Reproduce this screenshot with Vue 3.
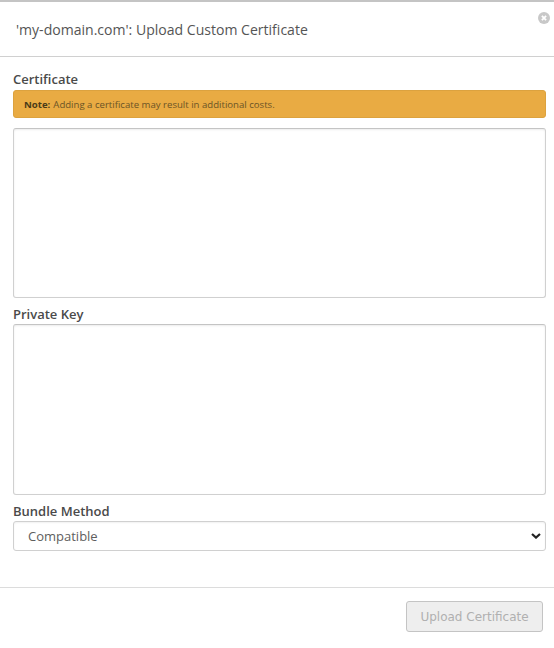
<template>
    <div class="modal">
        <div class="modal-header">
            <h2 class="modal-title">'my-domain.com': Upload Custom Certificate</h2>
            <span class="modal-close">
                <svg width="12" height="12" viewBox="0 0 12 12">
                    <circle cx="6" cy="6" r="6" fill="#c8c8c8" />
                    <path d="M3.9 3.9l4.2 4.2M8.1 3.9l-4.2 4.2" stroke="#fff" stroke-width="1.8" />
                </svg>
            </span>
        </div>
        <div class="modal-body">
            <label class="field-label first">Certificate</label>
            <div class="note"><strong>Note:</strong> Adding a certificate may result in additional costs.</div>
            <textarea class="field-area cert" v-model="certificate"></textarea>
            <label class="field-label">Private Key</label>
            <textarea class="field-area" v-model="privateKey"></textarea>
            <label class="field-label">Bundle Method</label>
            <div class="select-wrap">
                <select class="field-select" v-model="bundle">
                    <option v-for="opt in bundleOptions" :key="opt">{{ opt }}</option>
                </select>
                <svg class="select-arrow" width="10" height="6" viewBox="0 0 10 6">
                    <path d="M1 1l4 3.6L9 1" fill="none" stroke="#222" stroke-width="2.2" />
                </svg>
            </div>
        </div>
        <div class="modal-footer">
            <button class="btn-upload" disabled>Upload Certificate</button>
        </div>
    </div>
</template>

<script setup>
import { ref } from 'vue'

const certificate = ref("")
const privateKey = ref("")
const bundle = ref("Compatible")
const bundleOptions = ['Compatible', 'Modern', 'User-defined']
</script>

<style>
html,
body {
    margin: 0;
    background: #fff;
}
</style>

<style scoped>
.modal {
    width: 554px;
    height: 648px;
    box-sizing: border-box;
    display: flex;
    flex-direction: column;
    position: relative;
    border-top: 2px solid #c4c4c4;
    font-family: "Open Sans", "Liberation Sans", sans-serif;
    color: #444;
}

.modal-header {
    height: 55px;
    box-sizing: border-box;
    padding: 0 16px;
    display: flex;
    align-items: center;
    border-bottom: 1px solid #d0d0d0;
}

.modal-title {
    margin: 0;
    font-size: 14.05px;
    font-weight: 400;
    color: #555;
}

.modal-close {
    position: absolute;
    top: 10px;
    right: 4px;
    line-height: 0;
}

.modal-body {
    padding: 14px 8px 0 13px;
    display: flex;
    flex-direction: column;
    height: 530px;
    box-sizing: border-box;
}

.field-label {
    font-size: 13px;
    font-weight: 600;
    line-height: 17px;
    color: #4a4a4a;
    margin-top: 8px;
    margin-bottom: 1px;
}

.field-label.first {
    margin-top: 0;
    margin-bottom: 2px;
}

.note {
    height: 28px;
    box-sizing: border-box;
    background: #e9ab43;
    border: 1px solid #dca23f;
    border-radius: 3px;
    padding: 0 10px;
    display: flex;
    align-items: center;
    gap: 3px;
    font-size: 9.6px;
    color: #6b5426;
}

.note strong {
    font-weight: 700;
    color: #4a3a18;
}

.field-area {
    display: block;
    width: 533px;
    height: 171px;
    box-sizing: border-box;
    border: 1px solid #d0d0d0;
    border-top-color: #c4c4c4;
    border-radius: 3px;
    box-shadow: inset 0 1px 2px rgba(0, 0, 0, 0.08);
    background: #fff;
    resize: none;
    outline: none;
    padding: 6px;
}

.field-area.cert {
    margin-top: 10px;
    height: 170px;
}

.select-wrap {
    position: relative;
    width: 533px;
    height: 30px;
}

.field-select {
    width: 100%;
    height: 100%;
    box-sizing: border-box;
    appearance: none;
    border: 1px solid #d0d0d0;
    border-radius: 3px;
    box-shadow: inset 0 1px 2px rgba(0, 0, 0, 0.06);
    background: #fff;
    padding: 0 14px;
    font-family: inherit;
    font-size: 13px;
    color: #5e5e5e;
    outline: none;
}

.select-arrow {
    position: absolute;
    top: 12px;
    right: 5px;
    pointer-events: none;
}

.modal-footer {
    flex: 1;
    border-top: 1px solid #dcdcdc;
    padding: 13px 11px 0 0;
    display: flex;
    justify-content: flex-end;
    align-items: flex-start;
}

.btn-upload {
    width: 137px;
    height: 31px;
    box-sizing: border-box;
    border: 1px solid #c4c4c4;
    border-radius: 3px;
    background: #eeeeee;
    color: #b0b0b0;
    font-family: "DejaVu Sans", "Open Sans", sans-serif;
    font-size: 12px;
    padding: 0;
}
</style>
